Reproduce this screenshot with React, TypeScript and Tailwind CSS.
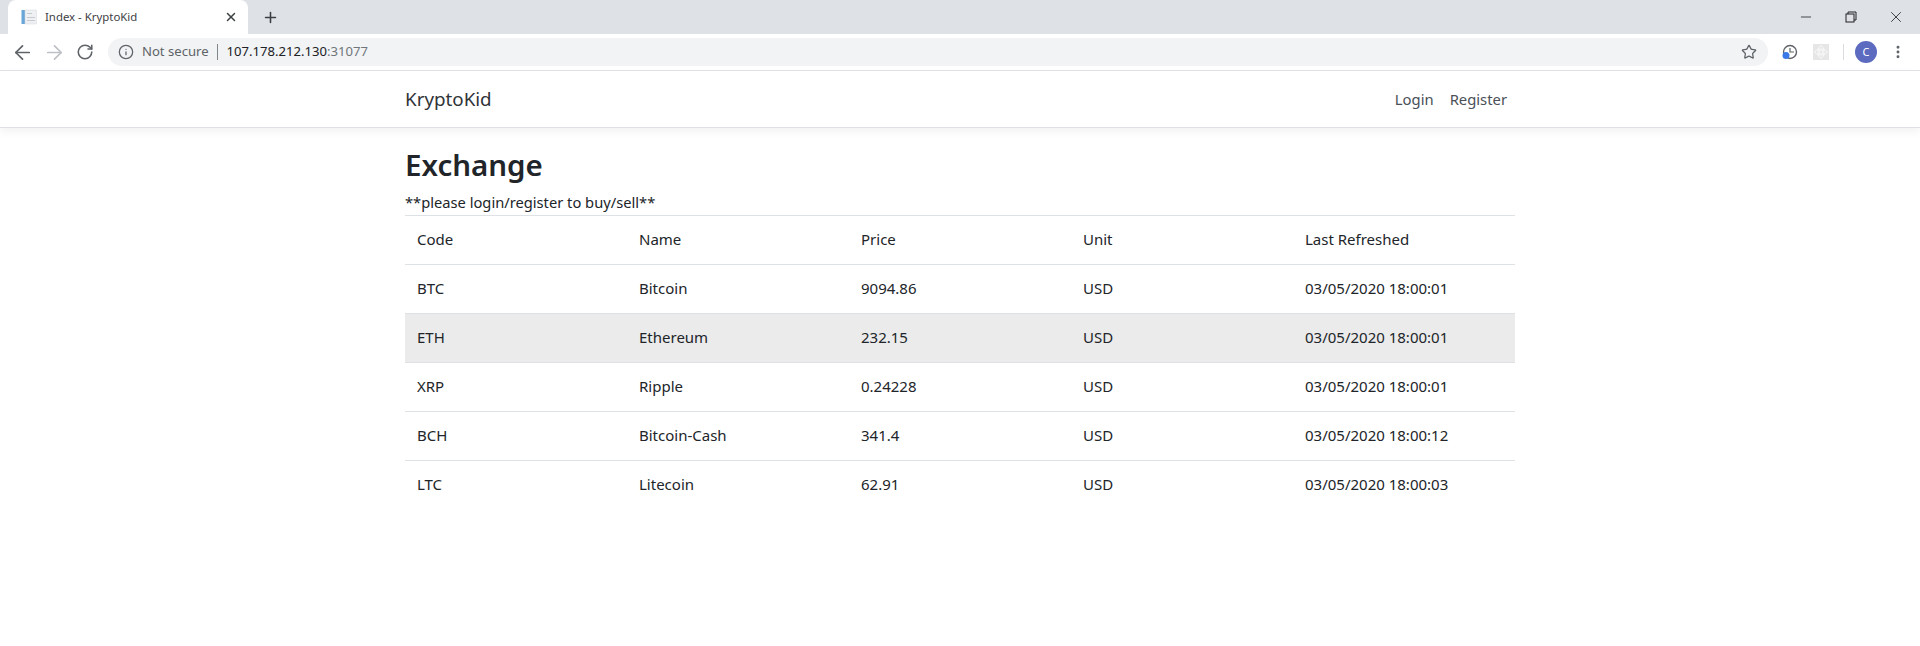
import { ArrowLeft, ArrowRight, Info, Minus, MoreVertical, Plus, RotateCw, Star, X } from "lucide-react";

const rows = [
  { code: "BTC", name: "Bitcoin", price: "9094.86", time: "03/05/2020 18:00:01" },
  { code: "ETH", name: "Ethereum", price: "232.15", time: "03/05/2020 18:00:01" },
  { code: "XRP", name: "Ripple", price: "0.24228", time: "03/05/2020 18:00:01" },
  { code: "BCH", name: "Bitcoin-Cash", price: "341.4", time: "03/05/2020 18:00:12" },
  { code: "LTC", name: "Litecoin", price: "62.91", time: "03/05/2020 18:00:03" },
];

function BrowserChrome() {
  return (
    <div className="font-['Noto_Sans',sans-serif]">
      {/* tab strip */}
      <div className="flex h-[34px] items-end bg-[#dee1e6]">
        <div className="ml-[8px] flex h-[34px] w-[240px] items-center rounded-t-[8px] bg-white pl-[13px] pr-[10px]">
          <svg width="16" height="16" viewBox="0 0 16 16" className="mr-[8px] shrink-0">
            <rect x="0.5" y="1" width="3.5" height="14" fill="#6aa5d8" />
            <rect x="4" y="1" width="11.5" height="14" fill="#eef0f3" stroke="#d3d7dc" strokeWidth="0.5" />
            <rect x="6" y="4" width="5" height="1" fill="#c5cad0" />
            <rect x="6" y="8" width="8" height="1" fill="#c5cad0" />
            <rect x="6" y="11" width="8" height="1" fill="#c5cad0" />
          </svg>
          <span className="flex-1 text-[11.4px] text-[#3c4043]">Index - KryptoKid</span>
          <X size={14} strokeWidth={2.5} className="text-[#3c4043]" />
        </div>
        <div className="flex h-[34px] w-[44px] items-center justify-center">
          <Plus size={17} strokeWidth={2.2} className="text-[#3c4043]" />
        </div>
        <div className="flex-1" />
        <div className="flex h-[34px] items-center pr-[15px] text-[#202124]">
          <Minus size={16} strokeWidth={1.2} className="mr-[31px]" />
          <svg width="12" height="12" viewBox="0 0 12 12" fill="none" stroke="currentColor" className="mr-[30px]">
            <rect x="1" y="3" width="8" height="8" />
            <path d="M3 3V1h8v8H9" />
          </svg>
          <X size={18} strokeWidth={1.1} />
        </div>
      </div>
      {/* toolbar */}
      <div className="flex h-[36px] items-center bg-white">
        <div className="flex w-[108px] items-center pl-[6px]">
          <div className="flex w-[32px] justify-center">
            <ArrowLeft size={23} strokeWidth={1.8} className="text-[#5f6368]" />
          </div>
          <div className="flex w-[32px] justify-center">
            <ArrowRight size={23} strokeWidth={1.8} className="text-[#bdc1c6]" />
          </div>
          <div className="flex w-[30px] justify-center">
            <RotateCw size={18} strokeWidth={2.1} className="text-[#5f6368]" />
          </div>
        </div>
        <div className="flex h-[28px] w-[1660px] items-center rounded-full bg-[#f1f3f4] pl-[10px] pr-[11px]">
          <Info size={16} strokeWidth={1.9} className="mr-[8px] text-[#5f6368]" />
          <span className="text-[13.1px] text-[#5f6368]">Not secure</span>
          <span className="ml-[8px] mr-[9px] h-[16px] w-px bg-[#80868b]" />
          <span className="flex-1 text-[13.1px] text-[#202124]">
            107.178.212.130<span className="text-[#70757a]">:31077</span>
          </span>
          <Star size={16} strokeWidth={1.9} className="text-[#5f6368]" />
        </div>
        <div className="flex flex-1 items-center">
          <svg width="17" height="17" viewBox="0 0 17 17" fill="none" className="ml-[13px]">
            <circle cx="9" cy="8" r="6.5" stroke="#5f6368" strokeWidth="1.4" />
            <path d="M9 4v4h4" stroke="#5f6368" strokeWidth="1.2" />
            <circle cx="5" cy="11.5" r="3.5" fill="#3b78e7" />
          </svg>
          <svg width="16" height="16" viewBox="0 0 16 16" fill="none" stroke="#fafafa" className="ml-[15px] bg-[#e6e6e6]">
            <ellipse cx="8" cy="8" rx="6" ry="3" />
            <ellipse cx="8" cy="8" rx="3" ry="6" />
            <circle cx="8" cy="8" r="2" />
          </svg>
          <div className="ml-[14px] h-[16px] w-px bg-[#dadce0]" />
          <div className="ml-[11px] flex h-[22px] w-[22px] items-center justify-center rounded-full bg-[#5c6bc0] text-[11px] text-white">
            C
          </div>
          <MoreVertical size={16} strokeWidth={2.4} className="ml-[13px] text-[#5f6368]" />
        </div>
      </div>
    </div>
  );
}

export default function App() {
  return (
    <div className="h-[646px] overflow-hidden bg-white font-['Noto_Sans',sans-serif] text-[#212529]">
      <BrowserChrome />

      <nav className="h-[58px] border-y border-[#dfe1e5] bg-white shadow-[0_4px_8px_rgba(0,0,0,0.05)]">
        <div className="mx-auto flex h-full w-[1110px] items-center justify-between">
          <span className="pt-[1px] text-[18.8px] text-[#2f3338]">KryptoKid</span>
          <div className="flex gap-[16px] pr-[8px] pt-[1px] text-[14.8px] text-[#495057]">
            <span>Login</span>
            <span>Register</span>
          </div>
        </div>
      </nav>

      <main className="mx-auto w-[1110px] pt-[18px]">
        <h2 className="mb-[7px] text-[29.5px] leading-[38px] font-semibold">Exchange</h2>
        <p className="h-[24px] text-[14.7px] leading-[22px]">**please login/register to buy/sell**</p>
        <table className="w-full table-fixed border-collapse text-[15px]">
          <thead>
            <tr className="border-y border-[#dee2e6]">
              <th className="px-[12px] pt-[11px] pb-[13px] text-left leading-[24px] font-normal">Code</th>
              <th className="px-[12px] pt-[11px] pb-[13px] text-left leading-[24px] font-normal">Name</th>
              <th className="px-[12px] pt-[11px] pb-[13px] text-left leading-[24px] font-normal">Price</th>
              <th className="px-[12px] pt-[11px] pb-[13px] text-left leading-[24px] font-normal">Unit</th>
              <th className="px-[12px] pt-[11px] pb-[13px] text-left leading-[24px] font-normal">Last Refreshed</th>
            </tr>
          </thead>
          <tbody>
            {rows.map((row) => (
              <tr
                key={row.code}
                className={
                  row.code === "ETH"
                    ? "border-b border-[#dee2e6] bg-[#ebebeb] last:border-b-0"
                    : "border-b border-[#dee2e6] last:border-b-0"
                }
              >
                <td className="px-[12px] pt-[11px] pb-[13px] leading-[24px]">{row.code}</td>
                <td className="px-[12px] pt-[11px] pb-[13px] leading-[24px]">{row.name}</td>
                <td className="px-[12px] pt-[11px] pb-[13px] leading-[24px]">{row.price}</td>
                <td className="px-[12px] pt-[11px] pb-[13px] leading-[24px]">USD</td>
                <td className="px-[12px] pt-[11px] pb-[13px] leading-[24px]">{row.time}</td>
              </tr>
            ))}
          </tbody>
        </table>
      </main>
    </div>
  );
}
